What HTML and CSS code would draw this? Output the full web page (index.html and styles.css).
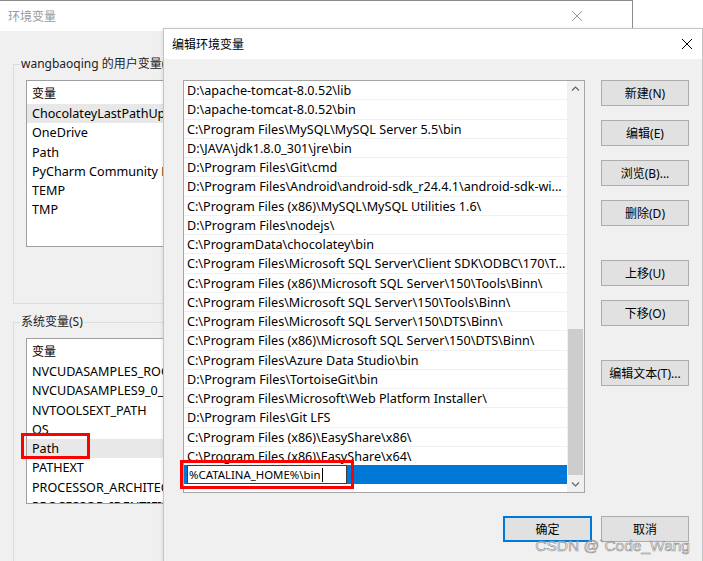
FILE: index.html
```html
<!DOCTYPE html>
<html lang="zh-CN">
<head>
  <meta charset="UTF-8" />
  <title>编辑环境变量</title>
  <link rel="stylesheet" href="styles.css">
</head>
<body>
  <div class="desktop">

    <!-- Background window: 环境变量 -->
    <div class="win">
      <div class="titlebar inactive">
        <span class="title">环境变量</span>
        <svg class="close" width="10" height="10" viewBox="0 0 10 10"><path d="M0 0L10 10M10 0L0 10" stroke="#9a9a9a" stroke-width="1"/></svg>
      </div>
      <div class="win-body">
        <fieldset class="group user">
          <legend>wangbaoqing 的用户变量(U)</legend>
          <div class="listview">
            <div class="lv-head">变量</div>
            <div class="lv-row sel">ChocolateyLastPathUpdate</div>
            <div class="lv-row">OneDrive</div>
            <div class="lv-row">Path</div>
            <div class="lv-row">PyCharm Community Edition</div>
            <div class="lv-row">TEMP</div>
            <div class="lv-row">TMP</div>
          </div>
        </fieldset>
        <fieldset class="group system">
          <legend>系统变量(S)</legend>
          <div class="listview">
            <div class="lv-head">变量</div>
            <div class="lv-row">NVCUDASAMPLES_ROOT</div>
            <div class="lv-row">NVCUDASAMPLES9_0_ROOT</div>
            <div class="lv-row">NVTOOLSEXT_PATH</div>
            <div class="lv-row">OS</div>
            <div class="lv-row sel">Path</div>
            <div class="lv-row">PATHEXT</div>
            <div class="lv-row">PROCESSOR_ARCHITECTURE</div>
            <div class="lv-row">PROCESSOR_IDENTIFIER</div>
          </div>
        </fieldset>
      </div>
    </div>

    <!-- Dialog: 编辑环境变量 -->
    <div class="dialog">
      <div class="titlebar">
        <span class="title">编辑环境变量</span>
        <svg class="close" width="10" height="10" viewBox="0 0 10 10"><path d="M0 0L10 10M10 0L0 10" stroke="#000" stroke-width="1"/></svg>
      </div>
      <div class="dlg-body">
        <div class="dlg-main">
          <div class="pathlist">
            <div class="rows">
              <div class="row">D:\apache-tomcat-8.0.52\lib</div>
              <div class="row">D:\apache-tomcat-8.0.52\bin</div>
              <div class="row">C:\Program Files\MySQL\MySQL Server 5.5\bin</div>
              <div class="row">D:\JAVA\jdk1.8.0_301\jre\bin</div>
              <div class="row">D:\Program Files\Git\cmd</div>
              <div class="row">D:\Program Files\Android\android-sdk_r24.4.1\android-sdk-wi...</div>
              <div class="row">C:\Program Files (x86)\MySQL\MySQL Utilities 1.6\</div>
              <div class="row">D:\Program Files\nodejs\</div>
              <div class="row">C:\ProgramData\chocolatey\bin</div>
              <div class="row">C:\Program Files\Microsoft SQL Server\Client SDK\ODBC\170\T...</div>
              <div class="row">C:\Program Files (x86)\Microsoft SQL Server\150\Tools\Binn\</div>
              <div class="row">C:\Program Files\Microsoft SQL Server\150\Tools\Binn\</div>
              <div class="row">C:\Program Files\Microsoft SQL Server\150\DTS\Binn\</div>
              <div class="row">C:\Program Files (x86)\Microsoft SQL Server\150\DTS\Binn\</div>
              <div class="row">C:\Program Files\Azure Data Studio\bin</div>
              <div class="row">D:\Program Files\TortoiseGit\bin</div>
              <div class="row">C:\Program Files\Microsoft\Web Platform Installer\</div>
              <div class="row">D:\Program Files\Git LFS</div>
              <div class="row">C:\Program Files (x86)\EasyShare\x86\</div>
              <div class="row">C:\Program Files (x86)\EasyShare\x64\</div>
              <div class="row current">
                <span class="edit">%CATALINA_HOME%\bin<i class="caret"></i></span>
              </div>
            </div>
            <div class="scrollbar">
              <svg class="arrow" width="17" height="17" viewBox="0 0 17 17"><path d="M5 9.5L8.5 6L12 9.5" fill="none" stroke="#606060" stroke-width="1.1"/></svg>
              <div class="track"><div class="thumb"></div></div>
              <svg class="arrow" width="17" height="17" viewBox="0 0 17 17"><path d="M5 7.5L8.5 11L12 7.5" fill="none" stroke="#606060" stroke-width="1.1"/></svg>
            </div>
          </div>

          <div class="side-buttons">
            <button class="btn">新建(N)</button>
            <button class="btn">编辑(E)</button>
            <button class="btn">浏览(B)...</button>
            <button class="btn">删除(D)</button>
            <button class="btn spaced">上移(U)</button>
            <button class="btn">下移(O)</button>
            <button class="btn spaced">编辑文本(T)...</button>
          </div>
        </div>

        <div class="dlg-footer">
          <button class="btn default">确定</button>
          <button class="btn">取消</button>
        </div>
      </div>

      <svg class="grip" width="8" height="8" viewBox="0 0 8 8">
        <rect x="6" y="0" width="2" height="2" fill="#b8b8b8"/>
        <rect x="3" y="3" width="2" height="2" fill="#b8b8b8"/>
        <rect x="6" y="3" width="2" height="2" fill="#b8b8b8"/>
        <rect x="0" y="6" width="2" height="2" fill="#b8b8b8"/>
        <rect x="3" y="6" width="2" height="2" fill="#b8b8b8"/>
        <rect x="6" y="6" width="2" height="2" fill="#b8b8b8"/>
      </svg>
    </div>

    <!-- Annotations on top of the screenshot -->
    <div class="mark mark-path"></div>
    <div class="mark mark-edit"></div>
    <div class="watermark">CSDN @`Code_Wang</div>

  </div>
</body>
</html>
```

FILE: styles.css
```css
* {
  box-sizing: border-box;
  margin: 0;
  padding: 0;
}

body {
  background: #fff;
  color: #000;
  font-family: "Noto Sans", "Noto Sans CJK SC", sans-serif;
  font-size: 12px;
  overflow: hidden;
}

.desktop {
  position: relative;
  width: 703px;
  height: 561px;
  overflow: hidden;
}

/* Title bars */
.titlebar {
  display: flex;
  align-items: center;
  justify-content: space-between;
  height: 30px;
  background: #fff;
}

.titlebar .close {
  display: block;
}

/* Background window */
.win {
  position: absolute;
  left: 0;
  top: 0;
  width: 633px;
  height: 600px;
  background: #f0f0f0;
  border-top: 1px solid #8c8c8c;
  border-right: 1px solid #8c8c8c;
}

.win .titlebar {
  padding: 0 50px 0 8px;
  color: #9a9a9a;
}

.win-body {
  padding: 25px 0 0 13px;
}

.group {
  width: 600px;
  border: 1px solid #dcdcdc;
  padding: 8px 0 56px 6px;
  min-width: 0;
}

.group legend {
  padding: 0 1px;
  line-height: 16px;
  color: #222;
}

.group.system {
  margin-top: 10px;
  padding-bottom: 100px;
}

.listview {
  width: 360px;
  height: 167px;
  margin-left: 6px;
  background: #fff;
  border: 1px solid #a0a0a0;
  overflow: hidden;
}

.system .listview {
  height: 166px;
}

.lv-head {
  height: 23px;
  line-height: 26px;
  padding-left: 5px;
}

.lv-row {
  height: 19.25px;
  line-height: 19.5px;
  padding-left: 5px;
  font-size: 12.6px;
  white-space: nowrap;
}

.lv-row.sel {
  background: #e8e8e8;
}

/* Edit dialog */
.dialog {
  position: absolute;
  left: 163px;
  top: 28px;
  width: 540px;
  height: 560px;
  background: #f0f0f0;
  border: 1px solid #c4c4c4;
  box-shadow: -1px 0 3px rgba(0, 0, 0, 0.08);
}

.dialog .titlebar {
  padding: 0 10px 0 8px;
}

.dlg-body {
  padding: 21px 13px 0 19px;
}

.dlg-main {
  display: flex;
  gap: 16px;
}

.pathlist {
  display: flex;
  width: 402px;
  height: 413px;
  background: #fff;
  border: 1px solid #a5a5a5;
}

.rows {
  flex: 1;
  overflow: hidden;
}

.row {
  height: 19.25px;
  line-height: 19px;
  padding-left: 3px;
  font-size: 12.6px;
  border-bottom: 1px solid #f0f0f0;
  white-space: nowrap;
  overflow: hidden;
}

.row.current {
  background: #0078d7;
  border-bottom: none;
  overflow: visible;
}

.edit {
  display: block;
  width: 160px;
  height: 19px;
  margin-top: -1px;
  padding-left: 1px;
  font-size: 11.4px;
  line-height: 17px;
  background: #fff;
  border: 1px solid #3c3c3c;
}

.caret {
  display: inline-block;
  width: 1px;
  height: 14px;
  margin-left: 2px;
  vertical-align: -3px;
  background: #000;
}

.scrollbar {
  display: flex;
  flex-direction: column;
  width: 17px;
  background: #f0f0f0;
}

.scrollbar .arrow {
  display: block;
  flex: none;
}

.track {
  flex: 1;
  display: flex;
  flex-direction: column;
  justify-content: flex-end;
}

.thumb {
  height: 146px;
  margin: 0 1px;
  background: #cdcdcd;
}

.side-buttons {
  display: flex;
  flex-direction: column;
  gap: 14px;
}

.btn {
  width: 88px;
  height: 26px;
  font-family: inherit;
  font-size: 12px;
  color: #000;
  background: #e1e1e1;
  border: 1px solid #adadad;
}

.btn.spaced {
  margin-top: 20px;
}

.dlg-footer {
  display: flex;
  justify-content: flex-end;
  gap: 9px;
  margin-top: 23px;
}

.btn.default {
  width: 89px;
  border: 2px solid #0078d7;
}

.grip {
  position: absolute;
  right: 3px;
  bottom: -1px;
}

/* Annotations */
.mark {
  position: absolute;
  border: 3px solid #f00;
}

.mark-path {
  left: 21px;
  top: 433px;
  width: 69px;
  height: 26px;
}

.mark-edit {
  left: 180px;
  top: 460px;
  width: 174px;
  height: 29px;
}

.watermark {
  position: absolute;
  right: 13px;
  bottom: 6px;
  font-family: "Liberation Sans", sans-serif;
  font-size: 15.5px;
  color: rgba(255, 255, 255, 0.55);
  -webkit-text-stroke: 0.6px #8c8c8c;
}
```
